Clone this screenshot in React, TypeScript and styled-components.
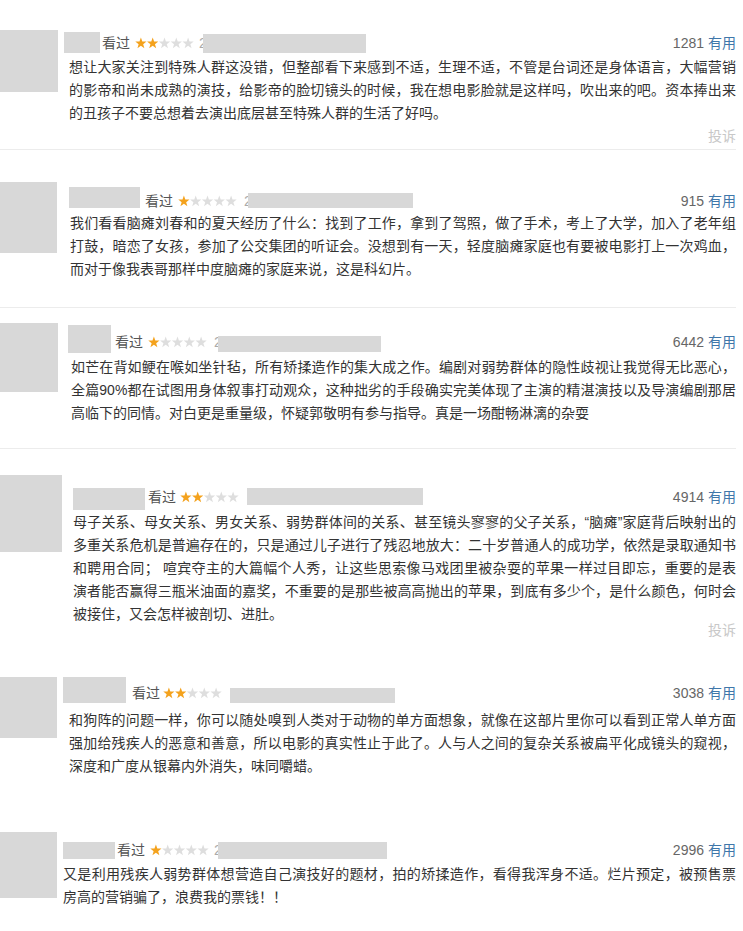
import React from 'react';
import styled, { createGlobalStyle } from 'styled-components';

const GlobalStyle = createGlobalStyle`
  html, body { margin: 0; padding: 0; background: #fff; }
  body { font-family: "Liberation Sans", "Noto Sans CJK SC", sans-serif; }
`;

const List = styled.main`
  display: flex;
  flex-direction: column;
  padding: 30px 7px 0 0;
`;

const Card = styled.section<{ $h?: number; $mb: number; $divider: boolean }>`
  display: flex;
  align-items: flex-start;
  box-sizing: border-box;
  ${(p) => (p.$h ? `height: ${p.$h}px;` : '')}
  margin-bottom: ${(p) => p.$mb}px;
  border-bottom: ${(p) => (p.$divider ? '1px solid #ececec' : 'none')};
`;

const Avatar = styled.div<{ $w: number; $h: number }>`
  flex-shrink: 0;
  width: ${(p) => p.$w}px;
  height: ${(p) => p.$h}px;
  background: #d8d8d8;
`;

const Body = styled.div<{ $ml: number }>`
  flex: 1;
  min-width: 0;
  display: flex;
  flex-direction: column;
  margin-left: ${(p) => p.$ml}px;
`;

const Header = styled.div<{ $mt: number; $pl: number }>`
  display: flex;
  align-items: center;
  height: 20px;
  margin-top: ${(p) => p.$mt}px;
  padding-left: ${(p) => p.$pl}px;
  font-size: 14px;
  line-height: 20px;
  color: #555;
  white-space: nowrap;
`;

const Redact = styled.div<{ $w: number; $h: number; $mt: number; $ml?: number }>`
  align-self: flex-start;
  flex-shrink: 0;
  width: ${(p) => p.$w}px;
  height: ${(p) => p.$h}px;
  margin-top: ${(p) => p.$mt}px;
  margin-left: ${(p) => p.$ml ?? 0}px;
  background: #d8d8d8;
`;

const Seen = styled.span<{ $ml: number }>`
  margin-left: ${(p) => p.$ml}px;
  color: #555;
`;

const StarRow = styled.svg<{ $ml: number }>`
  display: block;
  flex-shrink: 0;
  margin-left: ${(p) => p.$ml}px;
`;

const Partial = styled.span<{ $ml: number }>`
  display: inline-block;
  width: 4px;
  overflow: hidden;
  color: #aaa;
  margin-left: ${(p) => p.$ml}px;
`;

const Votes = styled.span`
  margin-left: auto;
  color: #666;
`;

const Useful = styled.a`
  margin-left: 4px;
  color: #3f77aa;
  text-decoration: none;
`;

const Text = styled.div<{ $mt: number; $pl: number; $fs: number }>`
  margin-top: ${(p) => p.$mt}px;
  padding-left: ${(p) => p.$pl}px;
  font-size: ${(p) => p.$fs}px;
  line-height: 23px;
  color: #333;
`;

const Line = styled.span<{ $last: boolean }>`
  display: block;
  text-align: justify;
  text-align-last: ${(p) => (p.$last ? 'left' : 'justify')};
`;

const Report = styled.span<{ $mt: number }>`
  align-self: flex-end;
  margin-top: ${(p) => p.$mt}px;
  font-size: 14px;
  line-height: 16px;
  color: #c8c8c8;
`;

function starPoints(cx: number, cy: number, R: number, r: number) {
  const pts: string[] = [];
  for (let i = 0; i < 10; i++) {
    const ang = (Math.PI / 5) * i - Math.PI / 2;
    const rad = i % 2 === 0 ? R : r;
    pts.push(`${(cx + rad * Math.cos(ang)).toFixed(2)},${(cy + rad * Math.sin(ang)).toFixed(2)}`);
  }
  return pts.join(' ');
}

const Stars: React.FC<{ rating: number; ml: number }> = ({ rating, ml }) => (
  <StarRow $ml={ml} width={59} height={12} viewBox="0 0 59 12">
    {[0, 1, 2, 3, 4].map((i) => (
      <polygon
        key={i}
        points={starPoints(5.9 + i * 11.8, 6.4, 5.9, 2.4)}
        fill={i < rating ? '#f4a21d' : '#dedede'}
      />
    ))}
  </StarRow>
);

type Comment = {
  avatar: [number, number];
  nameX: number;
  name: [number, number, number];
  seenX: number;
  starsX: number;
  rating: number;
  partial?: string;
  dateX: number;
  date: [number, number, number];
  headerTop: number;
  textX: number;
  textMt: number;
  fs: number;
  votes: string;
  lines: string[];
  reportMt?: number;
  height?: number;
  mb: number;
  divider: boolean;
};

const comments: Comment[] = [
  {
    avatar: [58, 62], nameX: 64, name: [36, 21, -1], seenX: 102, starsX: 135, rating: 2, partial: '2',
    dateX: 203, date: [163, 19, 1], headerTop: 3, textX: 69, textMt: 3, fs: 14, votes: '1281',
    lines: [
      '想让大家关注到特殊人群这没错，但整部看下来感到不适，生理不适，不管是台词还是身体语言，大幅营销',
      '的影帝和尚未成熟的演技，给影帝的脸切镜头的时候，我在想电影脸就是这样吗，吹出来的吧。资本捧出来',
      '的丑孩子不要总想着去演出底层甚至特殊人群的生活了好吗。',
    ],
    reportMt: 3, height: 120, mb: 32, divider: true,
  },
  {
    avatar: [57, 71], nameX: 69, name: [71, 21, -4], seenX: 145, starsX: 178, rating: 1, partial: '2',
    dateX: 248, date: [165, 15, 2], headerTop: 9, textX: 70, textMt: 1, fs: 14, votes: '915',
    lines: [
      '我们看看脑瘫刘春和的夏天经历了什么：找到了工作，拿到了驾照，做了手术，考上了大学，加入了老年组',
      '打鼓，暗恋了女孩，参加了公交集团的听证会。没想到有一天，轻度脑瘫家庭也有要被电影打上一次鸡血，',
      '而对于像我表哥那样中度脑瘫的家庭来说，这是科幻片。',
    ],
    height: 126, mb: 15, divider: true,
  },
  {
    avatar: [58, 69], nameX: 68, name: [43, 28, -7], seenX: 115, starsX: 148, rating: 1, partial: '2',
    dateX: 218, date: [163, 16, 4], headerTop: 9, textX: 71, textMt: 4, fs: 14, votes: '6442',
    lines: [
      '如芒在背如鲠在喉如坐针毡，所有矫揉造作的集大成之作。编剧对弱势群体的隐性歧视让我觉得无比恶心，',
      '全篇90%都在试图用身体叙事打动观众，这种拙劣的手段确实完美体现了主演的精湛演技以及导演编剧那居',
      '高临下的同情。对白更是重量级，怀疑郭敬明有参与指导。真是一场酣畅淋漓的杂耍',
    ],
    height: 126, mb: 26, divider: true,
  },
  {
    avatar: [62, 77], nameX: 73, name: [72, 22, 1], seenX: 148, starsX: 180, rating: 2,
    dateX: 247, date: [176, 17, 1], headerTop: 12, textX: 73, textMt: 4, fs: 14, votes: '4914',
    lines: [
      '母子关系、母女关系、男女关系、弱势群体间的关系、甚至镜头寥寥的父子关系，“脑瘫”家庭背后映射出的',
      '多重关系危机是普遍存在的，只是通过儿子进行了残忍地放大：二十岁普通人的成功学，依然是录取通知书',
      '和聘用合同； 喧宾夺主的大篇幅个人秀，让这些思索像马戏团里被杂耍的苹果一样过目即忘，重要的是表',
      '演者能否赢得三瓶米油面的嘉奖，不重要的是那些被高高抛出的苹果，到底有多少个，是什么颜色，何时会',
      '被接住，又会怎样被剖切、进肚。',
    ],
    reportMt: -4, height: 202, mb: 0, divider: false,
  },
  {
    avatar: [57, 61], nameX: 63, name: [63, 26, -6], seenX: 132, starsX: 163, rating: 2,
    dateX: 230, date: [165, 15, 5], headerTop: 6, textX: 69, textMt: 6, fs: 14, votes: '3038',
    lines: [
      '和狗阵的问题一样，你可以随处嗅到人类对于动物的单方面想象，就像在这部片里你可以看到正常人单方面',
      '强加给残疾人的恶意和善意，所以电影的真实性止于此了。人与人之间的复杂关系被扁平化成镜头的窥视，',
      '深度和广度从银幕内外消失，味同嚼蜡。',
    ],
    height: 155, mb: 0, divider: false,
  },
  {
    avatar: [57, 66], nameX: 63, name: [52, 17, 2], seenX: 117, starsX: 150, rating: 1, partial: '2',
    dateX: 218, date: [169, 17, 2], headerTop: 8, textX: 63, textMt: 3, fs: 14, votes: '2996',
    lines: [
      '又是利用残疾人弱势群体想营造自己演技好的题材，拍的矫揉造作，看得我浑身不适。烂片预定，被预售票',
      '房高的营销骗了，浪费我的票钱！！',
    ],
    mb: 0, divider: false,
  },
];

const CommentCard: React.FC<{ c: Comment }> = ({ c }) => {
  const bodyLeft = Math.min(c.nameX, c.textX);
  const seenMl = c.seenX - (c.nameX + c.name[0]);
  const starsMl = c.starsX - (c.seenX + 28);
  const starsEnd = c.starsX + 59;
  const partialMl = c.dateX - 4 - starsEnd;
  const dateMl = c.partial ? 0 : c.dateX - starsEnd;
  return (
    <Card $h={c.height} $mb={c.mb} $divider={c.divider}>
      <Avatar $w={c.avatar[0]} $h={c.avatar[1]} />
      <Body $ml={bodyLeft - c.avatar[0]}>
        <Header $mt={c.headerTop} $pl={c.nameX - bodyLeft}>
          <Redact $w={c.name[0]} $h={c.name[1]} $mt={c.name[2]} />
          <Seen $ml={seenMl}>看过</Seen>
          <Stars rating={c.rating} ml={starsMl} />
          {c.partial && <Partial $ml={partialMl}>{c.partial}</Partial>}
          <Redact $w={c.date[0]} $h={c.date[1]} $mt={c.date[2]} $ml={dateMl} />
          <Votes>
            {c.votes}
            <Useful href="#">有用</Useful>
          </Votes>
        </Header>
        <Text $mt={c.textMt} $pl={c.textX - bodyLeft} $fs={c.fs}>
          {c.lines.map((l, i) => (
            <Line key={i} $last={i === c.lines.length - 1}>
              {l}
            </Line>
          ))}
        </Text>
        {c.reportMt !== undefined && <Report $mt={c.reportMt}>投诉</Report>}
      </Body>
    </Card>
  );
};

export default function App() {
  return (
    <>
      <GlobalStyle />
      <List>
        {comments.map((c, i) => (
          <CommentCard key={i} c={c} />
        ))}
      </List>
    </>
  );
}
